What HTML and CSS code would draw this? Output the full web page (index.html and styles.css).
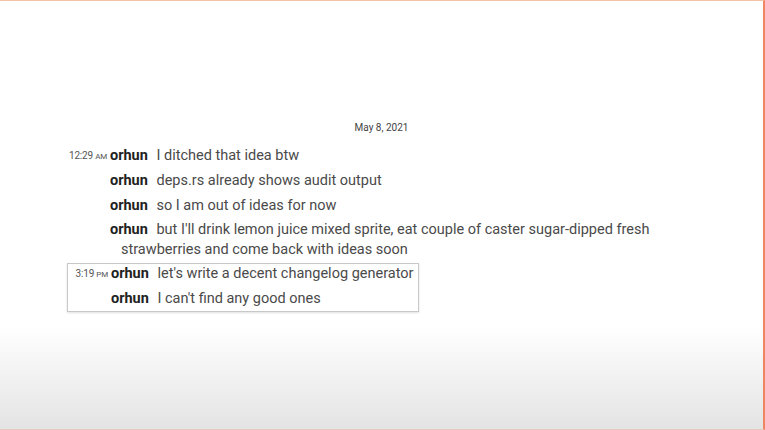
FILE: index.html
```html
<!DOCTYPE html>
<html lang="en">
<head>
<meta charset="utf-8"/>
<meta content="width=device-width, initial-scale=1.0" name="viewport"/>
<title>orhun - log</title>
<link rel="stylesheet" href="styles.css">
</head>
<body>
<div class="page">
<div class="date">May 8, 2021</div>
<div class="log">
<div class="msg">
<span class="time">12:29 <small>AM</small></span>
<div class="body"><b class="nick">orhun</b> I ditched that idea btw</div>
</div>
<div class="msg">
<span class="time"></span>
<div class="body"><b class="nick">orhun</b> deps.rs already shows audit output</div>
</div>
<div class="msg">
<span class="time"></span>
<div class="body"><b class="nick">orhun</b> so I am out of ideas for now</div>
</div>
<div class="msg">
<span class="time"></span>
<div class="body"><b class="nick">orhun</b> but I'll drink lemon juice mixed sprite, eat couple of caster sugar-dipped fresh strawberries and come back with ideas soon</div>
</div>
<div class="group">
<div class="msg">
<span class="time">3:19 <small>PM</small></span>
<div class="body"><b class="nick">orhun</b> let's write a decent changelog generator</div>
</div>
<div class="msg">
<span class="time"></span>
<div class="body"><b class="nick">orhun</b> I can't find any good ones</div>
</div>
</div>
</div>
</div>
</body>
</html>
```

FILE: styles.css
```css
html, body {
    margin: 0;
    padding: 0;
}
body {
    font-family: Roboto, "Liberation Sans", sans-serif;
    color: #4a4a4a;
    background: #fff;
}
.page {
    box-sizing: border-box;
    height: 430px;
    padding-top: 120px;
    border-top: 1px solid #f4c3aa;
    border-right: 2px solid #ee8563;
    border-bottom: 1px solid #e6cbbd;
    background: linear-gradient(to bottom, #fff 0, #fff 325px, #e3e3e3 430px);
}
.date {
    text-align: center;
    font-size: 10px;
    line-height: 14px;
    color: #444;
    margin-bottom: 10.5px;
}
.log {
    display: flex;
    flex-direction: column;
    gap: 4.5px;
    padding-left: 62px;
}
.msg {
    display: flex;
    align-items: flex-start;
}
.time {
    width: 45px;
    flex: none;
    text-align: right;
    font-size: 10px;
    line-height: 20px;
    color: #555;
    margin-right: 3px;
    letter-spacing: -0.2px;
}
.time small {
    font-size: 8px;
}
.body {
    width: 560px;
    font-size: 14.5px;
    line-height: 20px;
    padding-left: 11px;
    text-indent: -11px;
}
.nick {
    color: #222;
    font-weight: 700;
    margin-right: 5px;
}
.group {
    display: flex;
    flex-direction: column;
    gap: 4.5px;
    width: 350px;
    margin-left: 5px;
    margin-top: -2px;
    padding: 0 0 2px;
    border: 1px solid #c8c8c8;
    box-shadow: 0 1px 2px rgba(0, 0, 0, 0.12);
}
.group .time {
    width: 40px;
}
.group .body {
    width: 300px;
}
```
